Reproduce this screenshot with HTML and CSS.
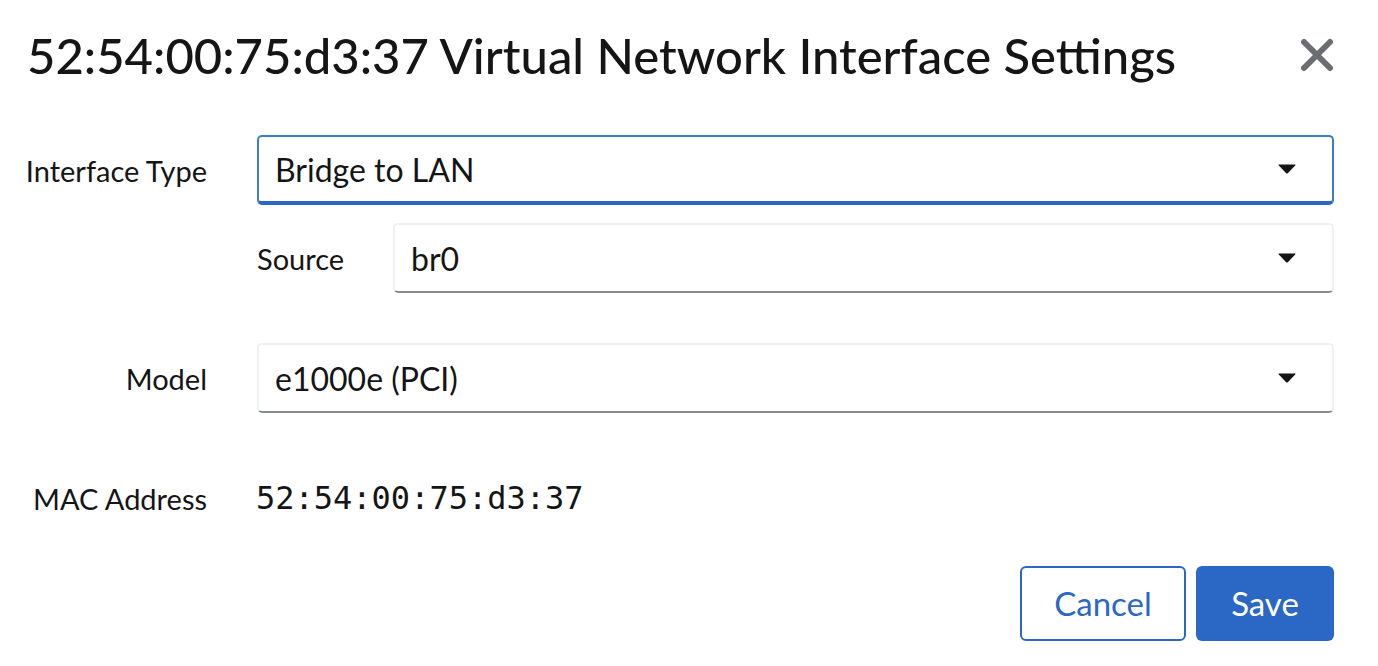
FILE: index.html
```html
<!DOCTYPE html>
<html lang="en">
<head>
    <meta charset="UTF-8">
    <meta name="viewport" content="width=device-width, initial-scale=1.0">
    <title>Virtual Network Interface Settings</title>
    <link rel="stylesheet" href="styles.css">
</head>
<body>
    <div class="modal">
        <header class="modal-header">
            <h1 class="modal-title">52:54:00:75:d3:37 Virtual Network Interface Settings</h1>
            <button class="close-btn" aria-label="Close">
                <svg width="34" height="34" viewBox="0 0 34 34">
                    <path d="M4 4 L30 30 M30 4 L4 30" stroke="#6a6e73" stroke-width="6" stroke-linecap="round"/>
                </svg>
            </button>
        </header>

        <form class="form">
            <label class="form-label">Interface Type</label>
            <div class="form-control">
                <div class="select select-focus">
                    <span>Bridge to LAN</span>
                    <svg class="caret" width="18" height="10" viewBox="0 0 18 10"><path d="M1 0.5 H17 Q18 0.5 17.2 1.5 L9.8 9.2 Q9 10 8.2 9.2 L0.8 1.5 Q0 0.5 1 0.5Z" fill="#151515"/></svg>
                </div>
                <div class="sub-row">
                    <label class="form-label sub-label">Source</label>
                    <div class="select">
                        <span>br0</span>
                        <svg class="caret" width="18" height="10" viewBox="0 0 18 10"><path d="M1 0.5 H17 Q18 0.5 17.2 1.5 L9.8 9.2 Q9 10 8.2 9.2 L0.8 1.5 Q0 0.5 1 0.5Z" fill="#151515"/></svg>
                    </div>
                </div>
            </div>

            <label class="form-label">Model</label>
            <div class="form-control">
                <div class="select">
                    <span>e1000e (PCI)</span>
                    <svg class="caret" width="18" height="10" viewBox="0 0 18 10"><path d="M1 0.5 H17 Q18 0.5 17.2 1.5 L9.8 9.2 Q9 10 8.2 9.2 L0.8 1.5 Q0 0.5 1 0.5Z" fill="#151515"/></svg>
                </div>
            </div>

            <label class="form-label">MAC Address</label>
            <div class="form-control mac-row">
                <span class="mac">52:54:00:75:d3:37</span>
            </div>
        </form>

        <footer class="modal-footer">
            <button class="btn btn-secondary">Cancel</button>
            <button class="btn btn-primary">Save</button>
        </footer>
    </div>
</body>
</html>
```
FILE: styles.css
```css
body {
    margin: 0;
    background-color: #fff;
    font-family: Lato, "Liberation Sans", sans-serif;
    color: #151515;
}
.modal {
    padding: 26px 44px 0 27px;
}
.modal-header {
    display: flex;
    align-items: center;
    justify-content: space-between;
    height: 58px;
}
.modal-title {
    margin: 0;
    font-size: 49px;
    font-weight: 500;
    white-space: nowrap;
}
.close-btn {
    background: none;
    border: none;
    padding: 0;
    display: flex;
}
.form {
    display: grid;
    grid-template-columns: 180px 1fr;
    column-gap: 50px;
    row-gap: 50px;
    margin-top: 51px;
}
.form-label {
    font-size: 29px;
    white-space: nowrap;
    height: 70px;
    display: flex;
    align-items: center;
    justify-content: flex-end;
}
.form-control {
    display: flex;
    flex-direction: column;
    gap: 18px;
}
.sub-row {
    display: flex;
    align-items: center;
    gap: 50px;
}
.sub-label {
    width: 86px;
    justify-content: flex-start;
}
.sub-row .select {
    flex: 1;
}
.select {
    box-sizing: border-box;
    height: 70px;
    display: flex;
    align-items: center;
    justify-content: space-between;
    padding: 0 36px 0 16px;
    font-size: 32px;
    border: 2px solid #f0f0f0;
    border-bottom-color: #8a8d90;
    border-radius: 5px;
}
.select-focus {
    border-color: #3a7fcf;
    border-bottom: 4px solid #2b67c5;
}
.mac-row {
    height: 70px;
    justify-content: center;
}
.mac {
    font-family: "DejaVu Sans Mono", monospace;
    font-size: 32px;
    margin-left: -1px;
}
.modal-footer {
    display: flex;
    justify-content: flex-end;
    gap: 10px;
    margin-top: 33px;
}
.btn {
    font-family: Lato, "Liberation Sans", sans-serif;
    font-size: 33px;
    height: 75px;
    border-radius: 6px;
    padding: 0 0 2px;
    box-sizing: border-box;
}
.btn-secondary {
    background: #fff;
    color: #2b67c5;
    border: 2px solid #2b67c5;
    width: 166px;
}
.btn-primary {
    background: #2b67c5;
    color: #fff;
    border: none;
    width: 138px;
}
```
